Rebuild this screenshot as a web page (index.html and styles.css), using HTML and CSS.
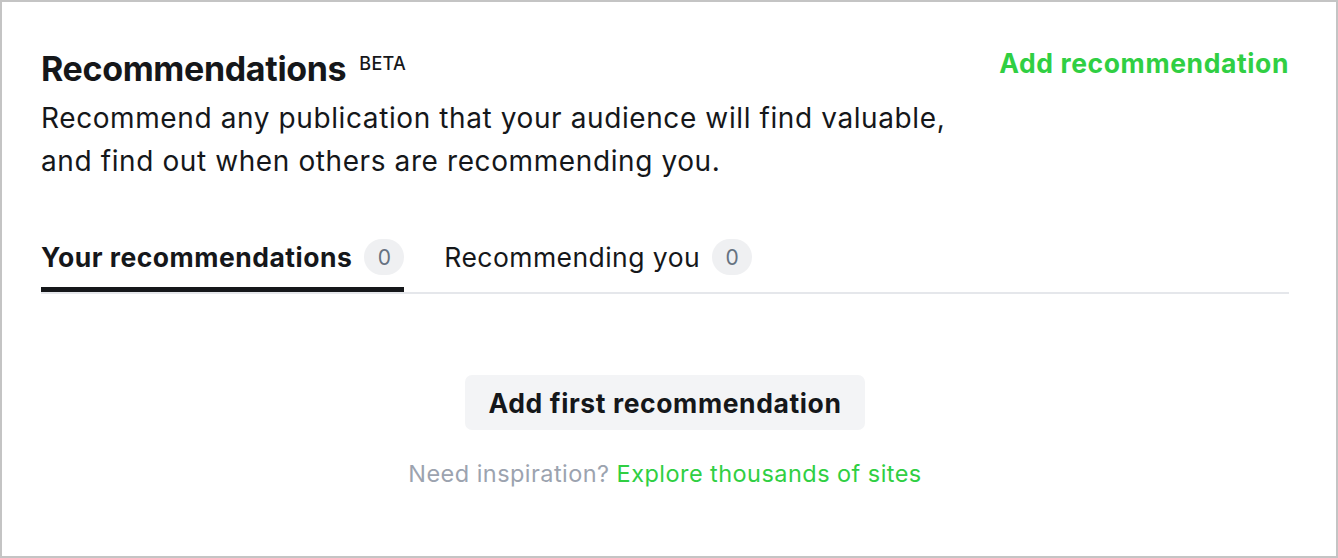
FILE: index.html
```html
<!DOCTYPE html>
<html>
<head>
<meta charset="utf-8">
<link rel="stylesheet" href="styles.css">
</head>
<body>
<div class="frame">
  <div class="header">
    <div class="intro">
      <h1 class="title">Recommendations<sup class="beta">BETA</sup></h1>
      <p class="desc">Recommend any publication that your audience will find valuable,<br>and find out when others are recommending you.</p>
    </div>
    <a class="add-link">Add recommendation</a>
  </div>
  <div class="tabs">
    <div class="tab active">Your recommendations <span class="count">0</span></div>
    <div class="tab">Recommending you <span class="count">0</span></div>
  </div>
  <div class="empty">
    <button class="primary">Add first recommendation</button>
    <p class="hint">Need inspiration? <a class="explore">Explore thousands of sites</a></p>
  </div>
</div>
</body>
</html>
```
FILE: styles.css
```css
* { box-sizing: border-box; }
html, body { margin: 0; padding: 0; background: #fff; }
body {
  font-family: Inter, "Noto Sans", sans-serif;
  color: #15171a;
}
.frame {
  width: 1338px;
  height: 558px;
  border: 2px solid #c4c4c4;
  padding: 47px 47px 0 39px;
}
.header { display: flex; justify-content: space-between; align-items: flex-start; }
.title {
  margin: 0;
  font-size: 34px;
  font-weight: 700;
  letter-spacing: -0.01em;
  line-height: 40px;
}
.beta {
  font-size: 18px;
  font-weight: 500;
  letter-spacing: 0.3px;
  margin-left: 13px;
  vertical-align: 11px;
  line-height: 0;
}
.desc {
  margin: 8px 0 0;
  font-size: 28px;
  line-height: 43px;
  letter-spacing: 0.6px;
  color: #15171a;
}
.add-link {
  color: #30cf43;
  font-weight: 700;
  font-size: 26.5px;
  line-height: 32px;
  letter-spacing: 0.6px;
  margin-top: -2px;
}
.tabs {
  display: flex;
  gap: 40px;
  margin-top: 56px;
  border-bottom: 2px solid #e5e7eb;
}
.tab {
  display: flex;
  align-items: center;
  gap: 12px;
  font-size: 26.5px;
  letter-spacing: 0.45px;
  height: 53px;
  padding-bottom: 12px;
  border-bottom: 5px solid transparent;
}
.tab.active { font-weight: 700; letter-spacing: 0.5px; border-bottom-color: #15171a; }
.count {
  display: inline-flex;
  align-items: center;
  justify-content: center;
  width: 40px;
  height: 36px;
  border-radius: 18px;
  background: #eff0f2;
  color: #667281;
  font-size: 21px;
  font-weight: 400;
  letter-spacing: 0;
}
.empty { display: flex; flex-direction: column; align-items: center; margin-top: 81px; }
.primary {
  font-family: inherit;
  background: #f3f4f6;
  border: 0;
  border-radius: 7px;
  height: 55px;
  padding: 0 24px;
  font-size: 26.5px;
  font-weight: 700;
  letter-spacing: 0.6px;
  color: #15171a;
}
.hint { margin: 29px 0 0; font-size: 23.5px; letter-spacing: 0.45px; color: #9ca3af; }
.explore { color: #30cf43; }
```
